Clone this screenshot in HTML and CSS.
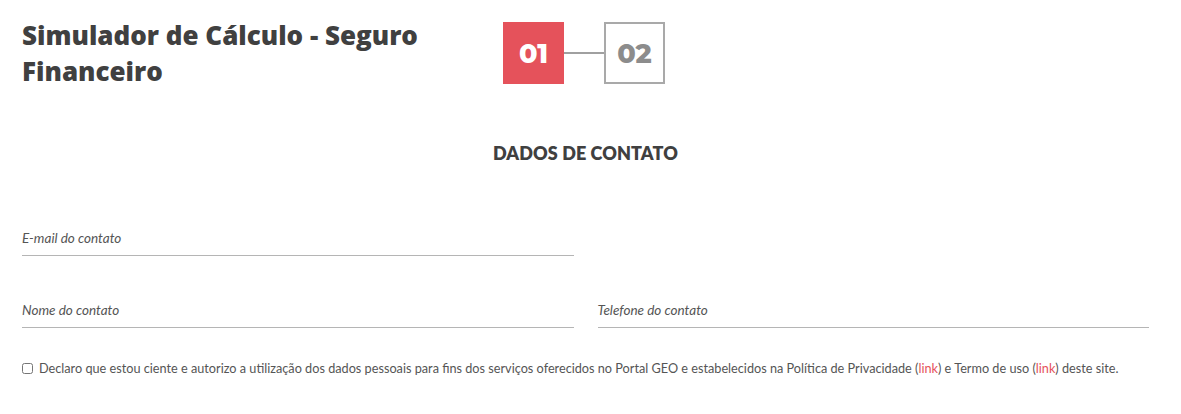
FILE: index.html
```html
<!DOCTYPE html>
<html lang="pt-BR">
<head>
<meta charset="utf-8">
<title>Simulador de Cálculo - Seguro Financeiro</title>
<link rel="stylesheet" href="styles.css">
</head>
<body>
<main class="page">
  <header class="top">
    <h1 class="title">Simulador de Cálculo - Seguro Financeiro</h1>
    <div class="steps">
      <div class="step step-active">01</div>
      <div class="step-line"></div>
      <div class="step">02</div>
    </div>
  </header>
  <h2 class="section-title">DADOS DE CONTATO</h2>
  <form class="form">
    <div class="row">
      <label class="field"><span class="field-label">E-mail do contato</span></label>
      <div class="field-empty"></div>
    </div>
    <div class="row">
      <label class="field"><span class="field-label">Nome do contato</span></label>
      <label class="field"><span class="field-label">Telefone do contato</span></label>
    </div>
    <label class="consent">
      <input type="checkbox" class="check">
      <span>Declaro que estou ciente e autorizo a utilização dos dados pessoais para fins dos serviços oferecidos no Portal GEO e estabelecidos na Política de Privacidade (<a class="link" href="#">link</a>) e Termo de uso (<a class="link" href="#">link</a>) deste site.</span>
    </label>
  </form>
</main>
</body>
</html>
```

FILE: styles.css
```css
* { box-sizing: border-box; }
html, body { margin: 0; padding: 0; background: #fff; }
body { font-family: "Lato", "Open Sans", sans-serif; color: #555; }
.page { padding: 22px 32px 0 22px; }
.top { display: flex; align-items: flex-start; }
.title {
  margin: -5px 0 0;
  width: 420px;
  font-family: "Open Sans", "Lato", sans-serif;
  font-weight: 800;
  font-size: 26px;
  line-height: 36px;
  letter-spacing: 0;
  color: #404040;
}
.steps { display: flex; align-items: center; margin-left: 61px; }
.step {
  width: 61px; height: 62px;
  display: flex; align-items: center; justify-content: center;
  border: 2px solid #a9a9a9;
  font-family: "Montserrat", "Lato", sans-serif;
  font-weight: 800; font-size: 27px;
  color: #8c8c8c;
}
.step-active { background: #e5525b; border-color: #e5525b; color: #fff; }
.step-line { width: 40px; height: 2px; background: #a0a0a0; }
.section-title {
  margin: 53px 0 0;
  text-align: center;
  font-size: 18px;
  font-weight: 800;
  color: #404040;
  letter-spacing: 0.1px;
}
.form { margin-top: 63px; }
.row { display: flex; gap: 24px; margin-bottom: 43px; }
.field, .field-empty { flex: 1; }
.field { display: block; border-bottom: 1px solid #b5b5b5; padding-bottom: 9px; }
.field-label { font-style: italic; font-size: 13.5px; color: #555; }
.consent { display: flex; align-items: center; gap: 6px; font-size: 12.7px; color: #555; margin-top: -11px; }
.check { margin: 0; width: 11px; height: 11px; }
.link { color: #e5525b; text-decoration: none; }
```
